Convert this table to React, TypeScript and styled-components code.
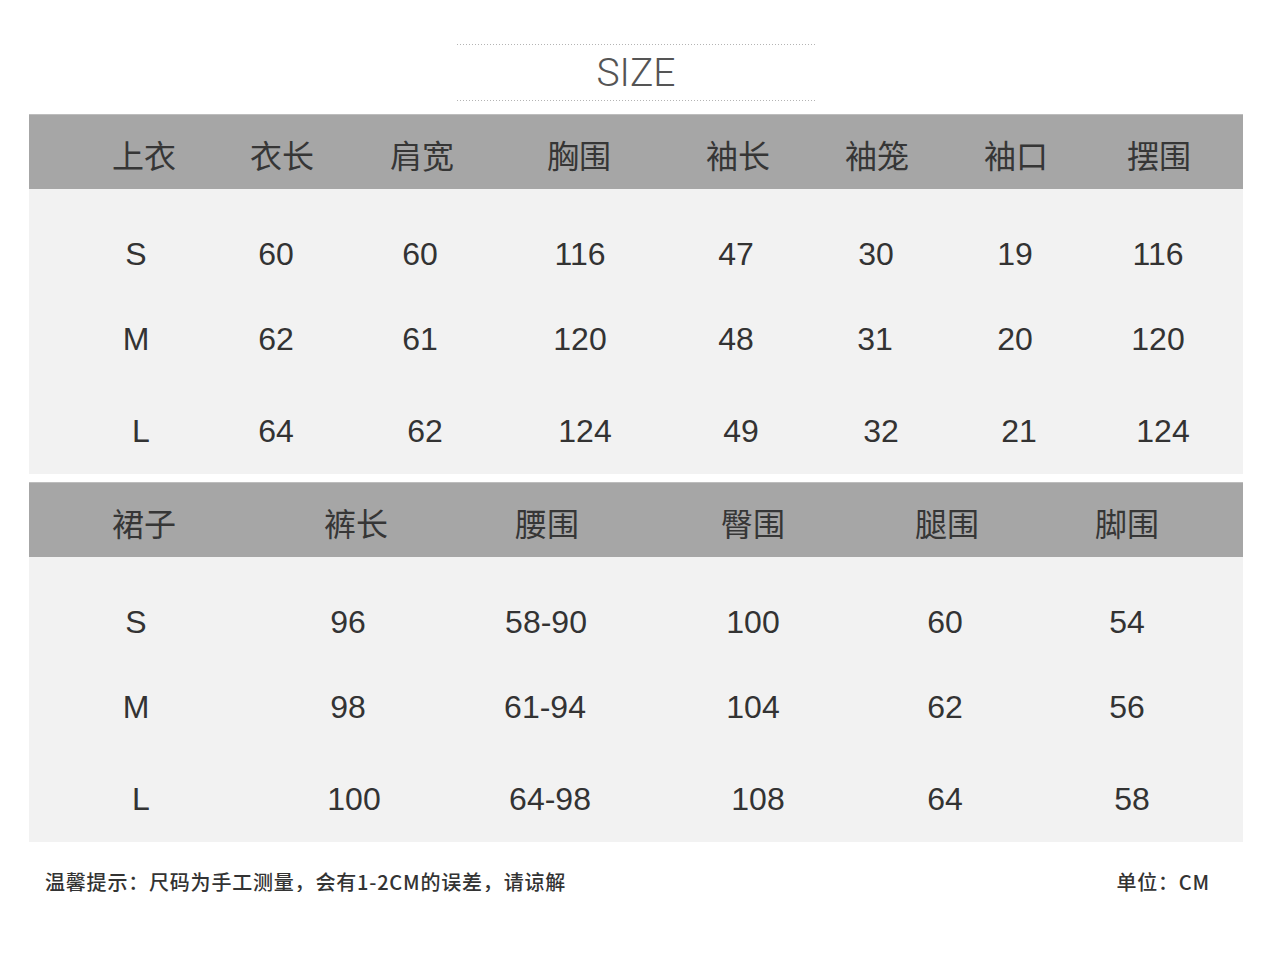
import React from "react";
import styled, { createGlobalStyle } from "styled-components";

const GlobalStyle = createGlobalStyle`
  body {
    margin: 0;
    background: #ffffff;
    font-family: "Liberation Sans", "Noto Sans CJK SC", sans-serif;
  }
`;

const Page = styled.div`
  width: 1214px;
  margin-left: 29px;
  padding-top: 44px;
`;

const TitleBlock = styled.div`
  width: 358px;
  height: 57px;
  margin: 0 auto;
  display: flex;
  align-items: center;
  justify-content: center;
  background-image: repeating-linear-gradient(
      90deg,
      #b4b4b4 0 1px,
      transparent 1px 3px
    ),
    repeating-linear-gradient(90deg, #b4b4b4 0 1px, transparent 1px 3px);
  background-size: 100% 1px, 100% 1px;
  background-position: 0 0, 0 100%;
  background-repeat: no-repeat;
`;

const Title = styled.h1`
  margin: 0;
  font-family: Roboto, "Noto Sans", sans-serif;
  font-weight: 300;
  font-size: 39px;
  line-height: 1;
  color: #555555;
  padding-top: 2px;
`;

const Table = styled.section<{ $gapTop: number }>`
  margin-top: ${(p) => p.$gapTop}px;
`;

const HeaderRow = styled.div`
  display: flex;
  height: 75px;
  align-items: center;
  background: #a6a6a6;
  border-top: 1px solid #bdbdbd;
  box-sizing: border-box;
`;

// zero-width slot: the label is centred on a fixed x position
const Slot = styled.div<{ $offset: number }>`
  width: 0;
  margin-left: ${(p) => p.$offset}px;
  display: flex;
  justify-content: center;
  white-space: nowrap;
`;

const HeadText = styled.span`
  font-family: "Noto Sans CJK SC", sans-serif;
  font-size: 32px;
  color: #363636;
  padding-top: 3px;
`;

const Body = styled.div`
  background: #f2f2f2;
  padding-top: 23px;
  height: 285px;
  box-sizing: border-box;
`;

const Row = styled.div<{ $h: number; $pt: number }>`
  display: flex;
  align-items: center;
  height: ${(p) => p.$h}px;
  padding-top: ${(p) => p.$pt}px;
  box-sizing: border-box;
`;

const CellText = styled.span`
  font-family: "Liberation Sans", Arial, sans-serif;
  font-size: 32px;
  color: #333333;
`;

const Footer = styled.footer`
  display: flex;
  justify-content: space-between;
  padding: 30px 33px 0 16px;
  font-family: "Noto Sans CJK SC", sans-serif;
  font-size: 20px;
  letter-spacing: 0.8px;
  line-height: 20px;
  color: #333333;
  font-weight: 500;
`;

type TableSpec = {
  heads: string[];
  headCenters: number[];
  cellCenters: number[][];
  rows: string[][];
};

const tops: TableSpec = {
  heads: ["上衣", "衣长", "肩宽", "胸围", "袖长", "袖笼", "袖口", "摆围"],
  headCenters: [115, 253, 393, 550, 709, 848, 987, 1130],
  cellCenters: [
    [107, 247, 391, 551, 707, 847, 986, 1129],
    [107, 247, 391, 551, 707, 846, 986, 1129],
    [112, 247, 396, 556, 712, 852, 990, 1134],
  ],
  rows: [
    ["S", "60", "60", "116", "47", "30", "19", "116"],
    ["M", "62", "61", "120", "48", "31", "20", "120"],
    ["L", "64", "62", "124", "49", "32", "21", "124"],
  ],
};

const skirts: TableSpec = {
  heads: ["裙子", "裤长", "腰围", "臀围", "腿围", "脚围"],
  headCenters: [115, 327, 518, 724, 918, 1098],
  cellCenters: [
    [107, 319, 517, 724, 916, 1098],
    [107, 319, 516, 724, 916, 1098],
    [112, 325, 521, 729, 916, 1103],
  ],
  rows: [
    ["S", "96", "58-90", "100", "60", "54"],
    ["M", "98", "61-94", "104", "62", "56"],
    ["L", "100", "64-98", "108", "64", "58"],
  ],
};

const rowBoxes = [
  { h: 85, pt: 0 },
  { h: 84, pt: 0 },
  { h: 93, pt: 7 },
];

const offsets = (centers: number[]) =>
  centers.map((c, i) => (i === 0 ? c : c - centers[i - 1]));

const SizeTable = ({ spec, gapTop }: { spec: TableSpec; gapTop: number }) => {
  const headOffsets = offsets(spec.headCenters);
  return (
    <Table $gapTop={gapTop}>
      <HeaderRow>
        {spec.heads.map((h, i) => (
          <Slot key={h} $offset={headOffsets[i]}>
            <HeadText>{h}</HeadText>
          </Slot>
        ))}
      </HeaderRow>
      <Body>
        {spec.rows.map((r, i) => {
          const cellOffsets = offsets(spec.cellCenters[i]);
          return (
            <Row key={r[0]} $h={rowBoxes[i].h} $pt={rowBoxes[i].pt}>
              {r.map((v, j) => (
                <Slot key={j} $offset={cellOffsets[j]}>
                  <CellText>{v}</CellText>
                </Slot>
              ))}
            </Row>
          );
        })}
      </Body>
    </Table>
  );
};

export default function App() {
  return (
    <>
      <GlobalStyle />
      <Page>
        <TitleBlock>
          <Title>SIZE</Title>
        </TitleBlock>
        <SizeTable spec={tops} gapTop={13} />
        <SizeTable spec={skirts} gapTop={8} />
        <Footer>
          <span>温馨提示：尺码为手工测量，会有1-2CM的误差，请谅解</span>
          <span>单位：CM</span>
        </Footer>
      </Page>
    </>
  );
}
